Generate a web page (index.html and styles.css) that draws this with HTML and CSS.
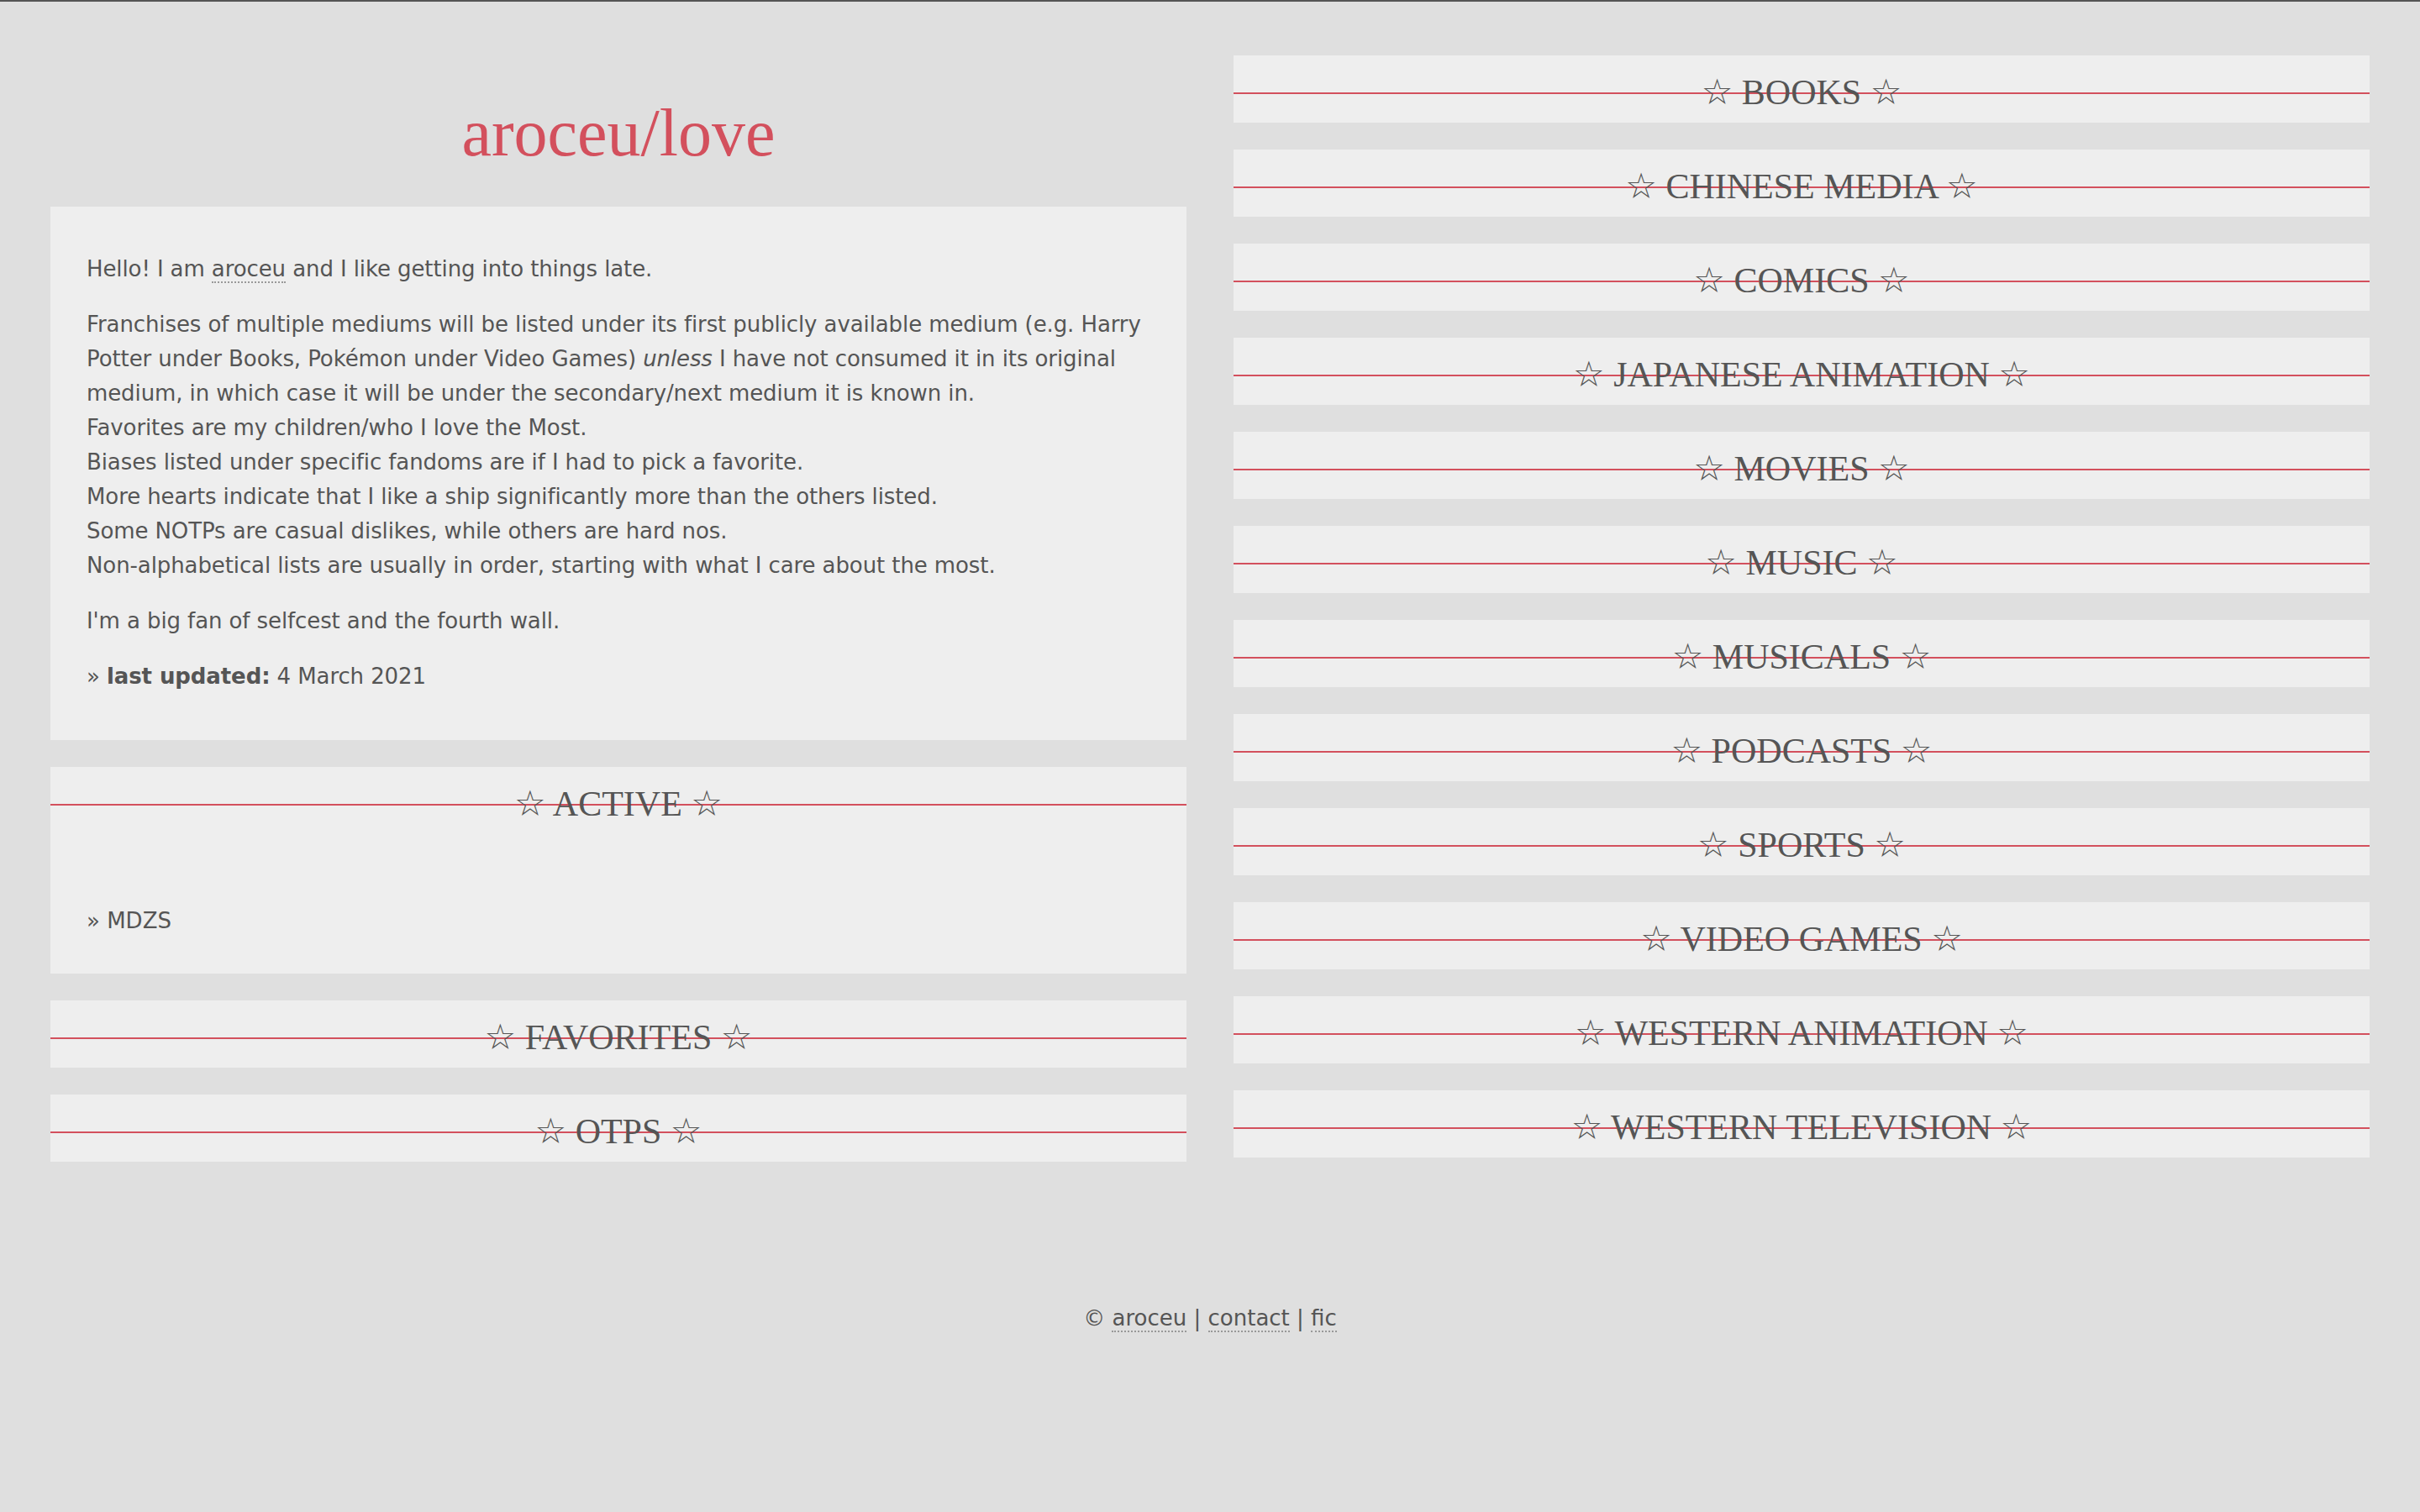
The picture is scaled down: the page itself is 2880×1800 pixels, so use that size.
FILE: index.html
```html
<!DOCTYPE html>
<html lang="en">
<head>
<meta charset="utf-8">
<title>aroceu/love</title>
<link rel="stylesheet" href="styles.css">
</head>
<body>
<div class="page">
  <div class="columns">
    <div class="col">
      <h1 class="title">aroceu/love</h1>
      <div class="box intro">
        <p>Hello! I am <a href="#">aroceu</a> and I like getting into things late.</p>
        <p>Franchises of multiple mediums will be listed under its first publicly available medium (e.g. Harry Potter under Books, Pokémon under Video Games) <em>unless</em> I have not consumed it in its original medium, in which case it will be under the secondary/next medium it is known in.<br>Favorites are my children/who I love the Most.<br>Biases listed under specific fandoms are if I had to pick a favorite.<br>More hearts indicate that I like a ship significantly more than the others listed.<br>Some NOTPs are casual dislikes, while others are hard nos.<br>Non-alphabetical lists are usually in order, starting with what I care about the most.</p>
        <p>I'm a big fan of selfcest and the fourth wall.</p>
        <p>» <b>last updated:</b> 4 March 2021</p>
      </div>
      <div class="box">
        <h2 class="head">☆ ACTIVE ☆</h2>
        <div class="body">
          <p>» MDZS</p>
        </div>
      </div>
      <div class="box"><h2 class="head">☆ FAVORITES ☆</h2></div>
      <div class="box"><h2 class="head">☆ OTPS ☆</h2></div>
    </div>
    <div class="col">
      <div class="box"><h2 class="head">☆ BOOKS ☆</h2></div>
      <div class="box"><h2 class="head">☆ CHINESE MEDIA ☆</h2></div>
      <div class="box"><h2 class="head">☆ COMICS ☆</h2></div>
      <div class="box"><h2 class="head">☆ JAPANESE ANIMATION ☆</h2></div>
      <div class="box"><h2 class="head">☆ MOVIES ☆</h2></div>
      <div class="box"><h2 class="head">☆ MUSIC ☆</h2></div>
      <div class="box"><h2 class="head">☆ MUSICALS ☆</h2></div>
      <div class="box"><h2 class="head">☆ PODCASTS ☆</h2></div>
      <div class="box"><h2 class="head">☆ SPORTS ☆</h2></div>
      <div class="box"><h2 class="head">☆ VIDEO GAMES ☆</h2></div>
      <div class="box"><h2 class="head">☆ WESTERN ANIMATION ☆</h2></div>
      <div class="box"><h2 class="head">☆ WESTERN TELEVISION ☆</h2></div>
    </div>
  </div>
  <footer class="footer">© <a href="#">aroceu</a> | <a href="#">contact</a> | <a href="#">fic</a></footer>
</div>
</body>
</html>
```

FILE: styles.css
```css
html, body {
  margin: 0;
  padding: 0;
}
body {
  background: #dfdfdf;
  border-top: 2px solid #555555;
  color: #555555;
  font-family: "DejaVu Sans", Verdana, sans-serif;
  font-size: 26px;
  line-height: 41px;
}
.page {
  padding: 64px 60px 0;
}
.columns {
  display: grid;
  grid-template-columns: 1fr 1fr;
  column-gap: 56px;
  align-items: start;
}
.col {
  display: flex;
  flex-direction: column;
  gap: 32px;
}
.title {
  margin: 42px 0 6px;
  font-family: "Liberation Serif", "Times New Roman", serif;
  font-weight: normal;
  font-size: 80px;
  line-height: 100px;
  color: #d3505d;
  text-align: center;
}
.box {
  background: #eeeeee;
}
.intro {
  padding: 29px 42px 30px 43px;
  letter-spacing: -0.1px;
}
.intro p, .body p {
  margin: 25px 0;
}
a {
  color: inherit;
  text-decoration: none;
  border-bottom: 2px dotted #999999;
}
em {
  font-style: italic;
}
.head {
  margin: 0;
  height: 80px;
  box-sizing: border-box;
  padding-top: 8px;
  font-family: "Liberation Serif", "Times New Roman", "DejaVu Sans", serif;
  font-weight: normal;
  font-size: 42px;
  line-height: 72px;
  text-align: center;
  color: #555555;
  background: linear-gradient(to bottom, transparent 44px, #d3505d 44px, #d3505d 46px, transparent 46px);
}
.body {
  padding: 58px 43px 17px;
}
.footer {
  margin-top: 166px;
  text-align: center;
}
```
